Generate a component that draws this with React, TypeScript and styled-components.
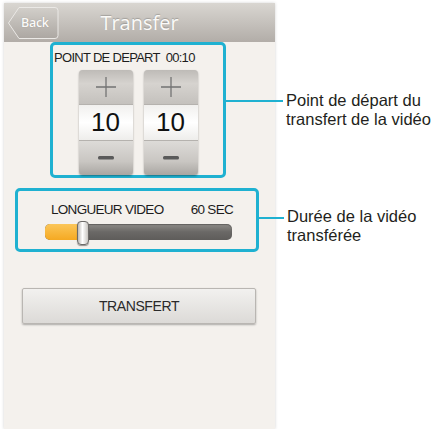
import React from "react";
import styled, { createGlobalStyle } from "styled-components";

const GlobalStyle = createGlobalStyle`
  html, body {
    margin: 0;
    padding: 0;
    background: #ffffff;
    font-family: "Liberation Sans", Arial, sans-serif;
  }
`;

const CYAN = "#1fb1d1";

const Screen = styled.div`
  width: 271px;
  height: 426px;
  margin: 3px 0 0 4px;
  background: #f4f1ed;
  box-shadow: 0 0 3px rgba(0, 0, 0, 0.18);
  display: flex;
  flex-direction: column;
`;

const Header = styled.header`
  height: 39px;
  display: flex;
  align-items: center;
  position: relative;
  background: linear-gradient(#d9d6d1, #b2ada8);
`;

const BackButton = styled.button`
  position: relative;
  margin-left: 3px;
  width: 52px;
  height: 34px;
  padding: 0 0 0 14px;
  border: none;
  background: none;
  color: #fbfaf8;
  font-family: "Open Sans", "Liberation Sans", sans-serif;
  font-size: 12.5px;
  font-weight: 600;
  letter-spacing: -0.3px;
  text-align: left;
  text-shadow: 0 0 1px rgba(0, 0, 0, 0.25);
  svg {
    position: absolute;
    left: 0;
    top: 0;
  }
  span {
    position: relative;
  }
`;

const Title = styled.h1`
  position: absolute;
  left: 0;
  right: 0;
  margin: 0;
  text-align: center;
  font-family: "Open Sans", "Liberation Sans", sans-serif;
  font-size: 20px;
  font-weight: normal;
  color: #fbfaf8;
  text-shadow: 0 -1px 1px rgba(0, 0, 0, 0.2);
  pointer-events: none;
`;

const Row = styled.div<{ $top: number; $left: number }>`
  display: flex;
  align-items: flex-start;
  margin-top: ${(p) => p.$top}px;
  margin-left: ${(p) => p.$left}px;
`;

const Frame = styled.section<{ $w: number; $h: number }>`
  box-sizing: border-box;
  width: ${(p) => p.$w}px;
  height: ${(p) => p.$h}px;
  border: 3px solid ${CYAN};
  border-radius: 5px;
  display: flex;
  flex-direction: column;
  flex-shrink: 0;
`;

const Callout = styled.div<{ $top: number; $line: number; $len: number }>`
  display: flex;
  align-items: flex-start;
  margin-top: ${(p) => p.$top}px;
  &::before {
    content: "";
    display: block;
    width: ${(p) => p.$len}px;
    height: 2px;
    margin-top: ${(p) => p.$line}px;
    margin-right: 3px;
    background: ${CYAN};
    flex-shrink: 0;
  }
`;

const CalloutText = styled.p`
  margin: 0;
  font-size: 16.5px;
  line-height: 19px;
  color: #231f20;
  white-space: nowrap;
`;

const FrameTitle = styled.div`
  font-size: 13px;
  letter-spacing: -0.7px;
  color: #1d1d1d;
  padding: 5px 0 0 1px;
  line-height: 15px;
`;

const Steppers = styled.div`
  display: flex;
  justify-content: center;
  gap: 11px;
  margin-top: 5px;
`;

const Stepper = styled.div`
  width: 54px;
  height: 105px;
  border-radius: 4px;
  overflow: hidden;
  display: flex;
  flex-direction: column;
  box-shadow: 0 1px 2px rgba(0, 0, 0, 0.35), inset 0 0 0 1px rgba(0, 0, 0, 0.12);
`;

const StepButton = styled.div<{ $minus?: boolean }>`
  height: 34px;
  display: flex;
  align-items: center;
  justify-content: center;
  background: ${(p) =>
    p.$minus
      ? "linear-gradient(#dddbd8, #c9c6c2 60%, #a9a6a2)"
      : "linear-gradient(#bebbb7, #d6d3cf 40%, #c4c1bd)"};
`;

const Value = styled.div`
  height: 37px;
  display: flex;
  align-items: center;
  justify-content: center;
  font-size: 26px;
  color: #111;
  background: linear-gradient(#f1f0ee, #ffffff 50%, #eeedeb);
  border-top: 1px solid #b5b2ae;
  border-bottom: 1px solid #b5b2ae;
  box-sizing: border-box;
`;

const SliderLabels = styled.div`
  display: flex;
  justify-content: space-between;
  width: 182px;
  margin: 11px 0 0 33px;
  font-size: 13.5px;
  letter-spacing: -0.7px;
  color: #1d1d1d;
  line-height: 15px;
`;

const Track = styled.div`
  position: relative;
  width: 187px;
  height: 16px;
  margin: 7px 0 0 27px;
  border-radius: 5px;
  background: linear-gradient(#8f8d8a, #6a6866 50%, #5e5c5a);
  box-shadow: inset 0 1px 1px rgba(0, 0, 0, 0.3);
`;

const Fill = styled.div`
  height: 100%;
  border-radius: 5px 0 0 5px;
  background: linear-gradient(#fbc659, #f5a922);
`;

const Thumb = styled.div`
  position: absolute;
  top: -3px;
  width: 10px;
  height: 22px;
  margin-left: -2px;
  border-radius: 4px;
  border: 1px solid #6d6b69;
  background: linear-gradient(90deg, #bdbab6, #ffffff 45%, #c8c5c1);
  box-shadow: 0 1px 1px rgba(0, 0, 0, 0.4);
`;

const TransferButton = styled.button`
  width: 234px;
  height: 36px;
  margin: 36px 0 0 18px;
  border: 1px solid #b9b6b2;
  border-radius: 2px;
  background: linear-gradient(#f2f1ef, #dcdad7);
  box-shadow: 0 1px 2px rgba(0, 0, 0, 0.3);
  font-family: "Liberation Sans", Arial, sans-serif;
  font-size: 14px;
  letter-spacing: -0.4px;
  color: #2a2a2a;
`;

const Plus = () => (
  <svg width="22" height="22" viewBox="0 0 22 22">
    <path d="M11 1v20M1 11h20" stroke="#737373" strokeWidth="1.3" />
  </svg>
);

const Minus = () => (
  <svg width="16" height="6" viewBox="0 0 16 6">
    <rect x="0" y="1" width="16" height="3.5" rx="1.5" fill="#5a5a5a" />
  </svg>
);

const BackShape = () => (
  <svg width="52" height="34" viewBox="0 0 52 34">
    <defs>
      <linearGradient id="bk" x1="0" y1="0" x2="0" y2="1">
        <stop offset="0" stopColor="#d2cfca" />
        <stop offset="1" stopColor="#aca7a2" />
      </linearGradient>
    </defs>
    <path
      d="M1.5 17 L12 1.5 H48 Q51 1.5 51 4.5 V29.5 Q51 32.5 48 32.5 H12 Z"
      fill="url(#bk)"
      stroke="#ebe9e6"
      strokeWidth="1"
    />
  </svg>
);

function Counter({ value }: { value: number }) {
  return (
    <Stepper>
      <StepButton>
        <Plus />
      </StepButton>
      <Value>{value}</Value>
      <StepButton $minus>
        <Minus />
      </StepButton>
    </Stepper>
  );
}

export default function App() {
  const progress = 18; // % of length slider
  return (
    <>
      <GlobalStyle />
      <Screen>
        <Header>
          <BackButton>
            <BackShape />
            <span>Back</span>
          </BackButton>
          <Title>Transfer</Title>
        </Header>

        <Row $top={0} $left={46}>
          <Frame $w={176} $h={136}>
            <FrameTitle>POINT DE DEPART&nbsp; 00:10</FrameTitle>
            <Steppers>
              <Counter value={10} />
              <Counter value={10} />
            </Steppers>
          </Frame>
          <Callout $top={49} $line={9} $len={57}>
            <CalloutText>
              Point de départ du
              <br />
              transfert de la vidéo
            </CalloutText>
          </Callout>
        </Row>

        <Row $top={10} $left={11}>
          <Frame $w={244} $h={64}>
            <SliderLabels>
              <span>LONGUEUR VIDEO</span>
              <span>60 SEC</span>
            </SliderLabels>
            <Track>
              <Fill style={{ width: `${progress}%` }} />
              <Thumb style={{ left: `${progress}%` }} />
            </Track>
          </Frame>
          <Callout $top={19} $line={10} $len={25}>
            <CalloutText>
              Durée de la vidéo
              <br />
              transférée
            </CalloutText>
          </Callout>
        </Row>

        <TransferButton>TRANSFERT</TransferButton>
      </Screen>
    </>
  );
}
